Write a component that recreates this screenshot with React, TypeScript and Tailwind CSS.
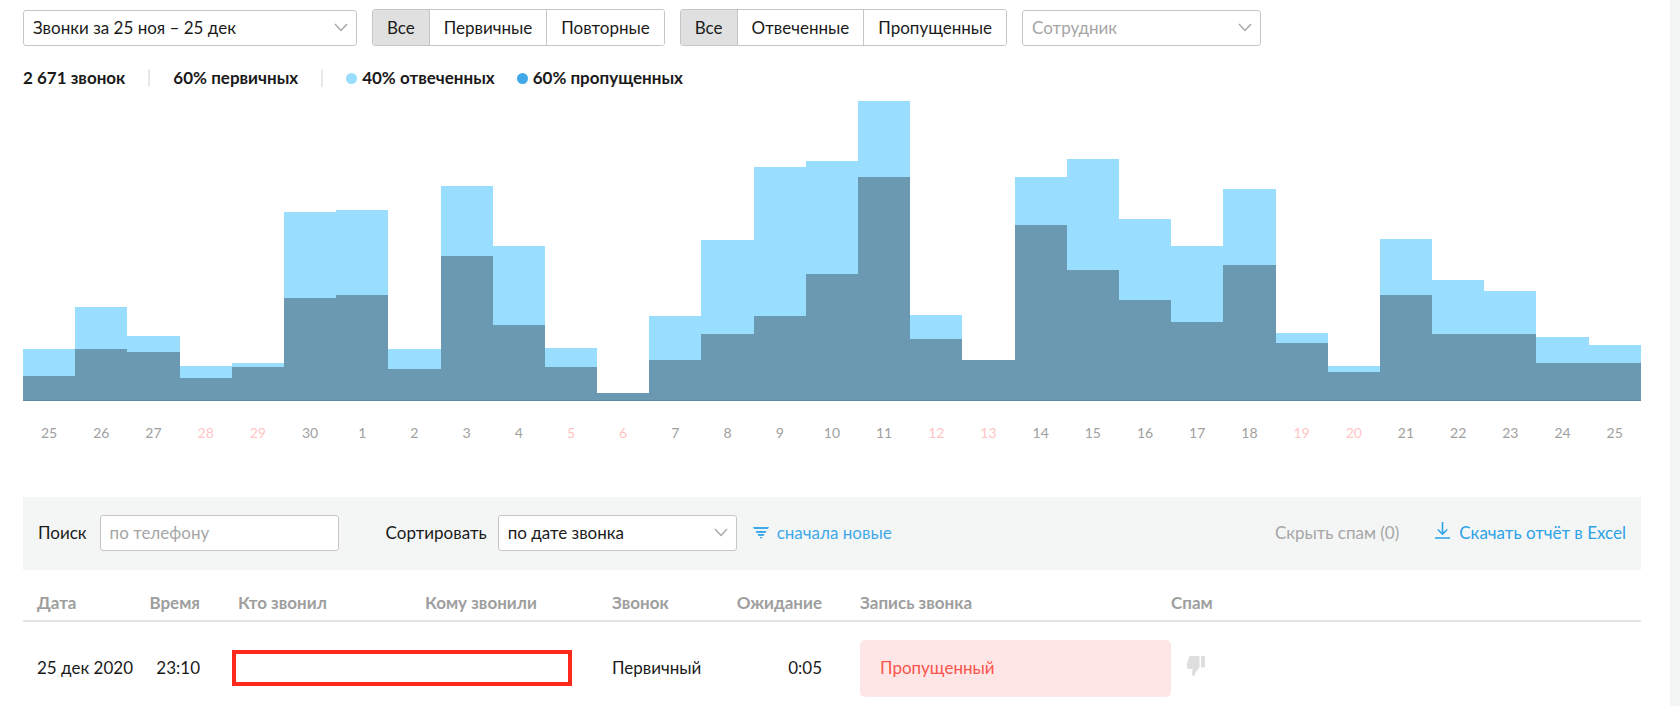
import { useState } from 'react'
import type { ReactNode } from 'react'

type Day = { day: number; total: number; missed: number; weekend?: boolean }

const DAYS: Day[] = [
  { day: 25, total: 34, missed: 16 },
  { day: 26, total: 62, missed: 34 },
  { day: 27, total: 43, missed: 32 },
  { day: 28, total: 23, missed: 15, weekend: true },
  { day: 29, total: 25, missed: 22, weekend: true },
  { day: 30, total: 126, missed: 68 },
  { day: 1, total: 127, missed: 70 },
  { day: 2, total: 34, missed: 21 },
  { day: 3, total: 143, missed: 96 },
  { day: 4, total: 103, missed: 50 },
  { day: 5, total: 35, missed: 22, weekend: true },
  { day: 6, total: 5, missed: 5, weekend: true },
  { day: 7, total: 56, missed: 27 },
  { day: 8, total: 107, missed: 44 },
  { day: 9, total: 156, missed: 56 },
  { day: 10, total: 160, missed: 84 },
  { day: 11, total: 200, missed: 149 },
  { day: 12, total: 57, missed: 41, weekend: true },
  { day: 13, total: 27, missed: 27, weekend: true },
  { day: 14, total: 149, missed: 117 },
  { day: 15, total: 161, missed: 87 },
  { day: 16, total: 121, missed: 67 },
  { day: 17, total: 103, missed: 52 },
  { day: 18, total: 141, missed: 90 },
  { day: 19, total: 45, missed: 38, weekend: true },
  { day: 20, total: 23, missed: 19, weekend: true },
  { day: 21, total: 108, missed: 70 },
  { day: 22, total: 80, missed: 44 },
  { day: 23, total: 73, missed: 44 },
  { day: 24, total: 42, missed: 25 },
  { day: 25, total: 37, missed: 25 },
]

const MAX_CALLS = Math.max(...DAYS.map((d) => d.total))

function Select({ id, label, className, children }: { id: string; label?: string; className: string; children: ReactNode }) {
  return (
    <div className={`relative ${className}`}>
      <select
        id={id}
        aria-label={label}
        className="block h-9 w-full appearance-none rounded-[3px] border border-[#c6c6c6] bg-white pr-8 pl-[9px] text-inherit outline-none focus:border-[#3fa9ea]"
      >
        {children}
      </select>
      <svg
        className="pointer-events-none absolute top-3 right-[9px] h-3 w-[14px]"
        viewBox="0 0 14 12"
        fill="none"
        stroke="#a6a6a6"
        strokeWidth="1.4"
      >
        <path d="M1 2l6 6.5L13 2" />
      </svg>
    </div>
  )
}

function Segmented({ label, options }: { label: string; options: string[] }) {
  const [active, setActive] = useState(0)

  return (
    <div role="group" aria-label={label} className="flex h-[37px] divide-x divide-[#c6c6c6] overflow-hidden rounded-[3px] border border-[#c6c6c6]">
      {options.map((option, i) => (
        <button
          key={option}
          type="button"
          aria-pressed={i === active}
          onClick={() => setActive(i)}
          className={`px-[14px] ${i === active ? 'bg-[#e0e0e0]' : 'bg-white'}`}
        >
          {option}
        </button>
      ))}
    </div>
  )
}

function CallsChart() {
  return (
    <div className="mt-[11px]">
      <div className="flex h-[300px] items-end border-b border-[#5b8aa3]">
        {DAYS.map((d, i) => (
          <div
            key={i}
            className="flex flex-1 flex-col justify-end bg-[#99ddff]"
            style={{ height: `${(d.total / MAX_CALLS) * 100}%` }}
          >
            <div className="bg-[#6b99b1]" style={{ height: `${(d.missed / d.total) * 100}%` }} />
          </div>
        ))}
      </div>
      <div className="mt-[22px] flex text-sm leading-5">
        {DAYS.map((d, i) => (
          <span key={i} className={`flex-1 text-center ${d.weekend ? 'text-[#ffc5c5]' : 'text-[#a0a0a0]'}`}>
            {d.day}
          </span>
        ))}
      </div>
    </div>
  )
}

export default function App() {
  return (
    <div className="min-h-screen bg-[#f4f6f6] pr-[10px] font-[Lato,'Noto_Sans',sans-serif] text-[17px] leading-6 text-[#1a1a1a]">
      <main className="min-h-screen bg-white pt-[9px] pr-[29px] pl-[23px]">
        <div className="flex items-center gap-[15px]">
          <Select id="period" label="Период" className="w-[334px]">
            <option>Звонки за 25 ноя – 25 дек</option>
          </Select>
          <Segmented label="Тип звонка" options={['Все', 'Первичные', 'Повторные']} />
          <Segmented label="Статус звонка" options={['Все', 'Отвеченные', 'Пропущенные']} />
          <Select id="employee" label="Сотрудник" className="w-[239px] text-[#a6a6a6]">
            <option>Сотрудник</option>
          </Select>
        </div>

        <div className="mt-5 flex items-center font-bold">
          <span>2 671 звонок</span>
          <span className="mx-[23px] h-[18px] w-0.5 bg-[#e8e8e8]" />
          <span>60% первичных</span>
          <span className="mx-[23px] h-[18px] w-0.5 bg-[#e8e8e8]" />
          <span className="flex items-center gap-[5px]">
            <span className="size-[11px] rounded-full bg-[#99ddff]" />
            40% отвеченных
          </span>
          <span className="ml-[22px] flex items-center gap-[5px]">
            <span className="size-[11px] rounded-full bg-[#3fa9ea]" />
            60% пропущенных
          </span>
        </div>

        <CallsChart />

        <div className="mt-[54px] flex h-[73px] items-center bg-[#f4f6f6] px-[15px] pb-[2px]">
          <label htmlFor="phone">Поиск</label>
          <input
            id="phone"
            type="text"
            placeholder="по телефону"
            className="ml-[13px] h-9 w-[239px] rounded-[3px] border border-[#c6c6c6] bg-white px-[9px] outline-none placeholder:text-[#a6a6a6] focus:border-[#3fa9ea]"
          />
          <label htmlFor="sort" className="ml-[47px]">Сортировать</label>
          <Select id="sort" className="ml-[11px] w-[239px]">
            <option>по дате звонка</option>
          </Select>
          <button type="button" className="ml-4 flex items-center gap-2 text-[#3fa9ea]">
            <svg className="h-3 w-4" viewBox="0 0 16 12" fill="currentColor">
              <path d="M0 0h16l-1 2H1zM2.500 4h11l-1 2h-9zM4.500 7h7l-1 2h-5zM6.500 10h3L8 12z" />
            </svg>
            сначала новые
          </button>
          <button type="button" className="ml-auto text-[#a6a6a6]">Скрыть спам (0)</button>
          <a href="#excel" className="ml-9 flex items-center gap-[9px] text-[#2da2e6]">
            <svg className="mb-1 h-[17px] w-[15px]" viewBox="0 0 15 17" fill="none" stroke="currentColor" strokeWidth="1.6">
              <path d="M7.500 0v12M2.800 7.500l4.700 4.700 4.700-4.700M0 16h15" />
            </svg>
            Скачать отчёт в Excel
          </a>
        </div>

        <table className="mt-5 w-full table-fixed text-left">
          <colgroup>
            <col className="w-[117px]" />
            <col className="w-[92px]" />
            <col className="w-[187px]" />
            <col className="w-[187px]" />
            <col className="w-[127px]" />
            <col className="w-[127px]" />
            <col className="w-[311px]" />
            <col />
          </colgroup>
          <thead className="border-b-2 border-[#e4e4e4] text-[#9e9e9e]">
            <tr className="h-[31px]">
              <th className="pb-1 pl-[14px]">Дата</th>
              <th className="pr-8 pb-1 text-right">Время</th>
              <th className="pb-1 pl-[6px]">Кто звонил</th>
              <th className="pb-1 pl-[6px]">Кому звонили</th>
              <th className="pb-1 pl-[6px]">Звонок</th>
              <th className="pr-[38px] pb-1 text-right">Ожидание</th>
              <th className="pb-1">Запись звонка</th>
              <th className="pb-1">Спам</th>
            </tr>
          </thead>
          <tbody>
            <tr className="h-[93px]">
              <td className="pl-[14px] whitespace-nowrap">25 дек 2020</td>
              <td className="pr-8 text-right">23:10</td>
              <td colSpan={2}>
                <div className="mr-[34px] h-9 border-4 border-[#ff2a1c]" />
              </td>
              <td className="pl-[6px]">Первичный</td>
              <td className="pr-[38px] text-right">0:05</td>
              <td>
                <div className="flex h-[57px] items-center rounded-[5px] bg-[#ffe6e6] px-5 text-[#f9544b]">Пропущенный</div>
              </td>
              <td>
                <button type="button" aria-label="Спам" className="ml-4 block pb-1 text-[#dedede]">
                  <svg className="h-5 w-[18px]" viewBox="0 0 18 20" fill="currentColor">
                    <path d="M3.500 0H12.500V11.500L8.500 16.500 7 20C5.200 20 4.600 18.500 5 16.500L5.800 13H1.500C.3 13 0 12 0 11V7.500L2 1.200C2.300.4 2.800 0 3.500 0ZM14 0h4v11.500h-4z" />
                  </svg>
                </button>
              </td>
            </tr>
          </tbody>
        </table>
      </main>
    </div>
  )
}
